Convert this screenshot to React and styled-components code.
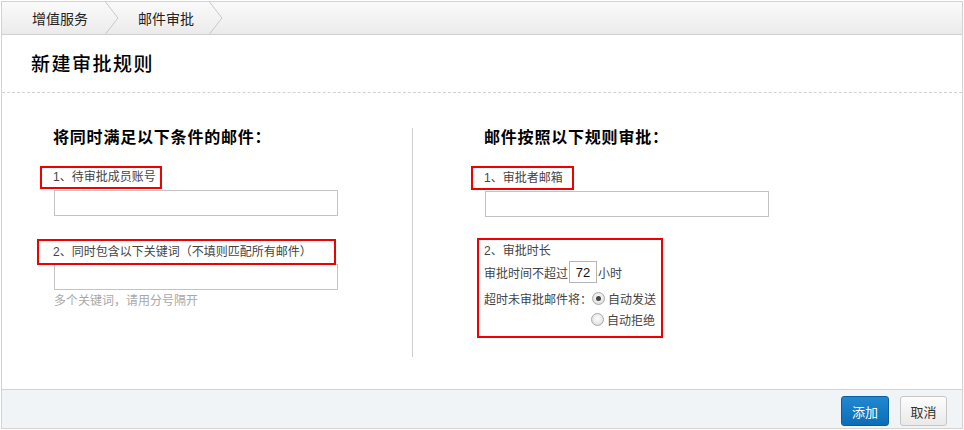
import styled, { createGlobalStyle } from "styled-components"

const Global = createGlobalStyle`
  html, body {
    margin: 0;
    padding: 0;
    background: #ffffff;
  }
  body {
    font-family: "Liberation Sans", "Noto Sans CJK SC", sans-serif;
    font-size: 12px;
    color: #333;
  }
`

const Page = styled.div`
  padding: 1px;
  width: 964px;
  box-sizing: border-box;
`

const Frame = styled.div`
  border: 1px solid #d3d3d3;
  height: 428px;
  box-sizing: border-box;
  display: flex;
  flex-direction: column;
`

const Crumbs = styled.div`
  height: 33px;
  box-sizing: border-box;
  border-bottom: 1px solid #d0d0d0;
  background: linear-gradient(#fafafa, #ebebeb);
  display: flex;
  align-items: stretch;
  padding-left: 30px;
`

const Crumb = styled.div`
  display: flex;
  align-items: center;
  font-size: 14px;
  color: #222;
  margin-right: ${(p) => p.$gap}px;
`

const Chevron = styled.svg`
  width: 14px;
  height: 32px;
  margin-left: ${(p) => p.$ml}px;
  flex: none;
`

const TitleBar = styled.div`
  height: 58px;
  box-sizing: border-box;
  border-bottom: 1px dashed #d2d2d2;
  display: flex;
  align-items: center;
  padding-left: 29px;
  padding-bottom: 2px;
`

const Title = styled.h1`
  margin: 0;
  font-size: 19px;
  font-weight: 500;
  letter-spacing: 1.5px;
  color: #000;
`

const Body = styled.div`
  flex: 1;
  display: flex;
  padding-top: 35px;
`

const Column = styled.div`
  box-sizing: border-box;
  width: ${(p) => p.$w}px;
  padding-left: ${(p) => p.$pl}px;
  ${(p) => p.$divider && "border-left: 1px solid #cfcfcf; height: 229px;"}
`

const Heading = styled.h2`
  margin: 0 0 18px;
  font-size: 16px;
  line-height: 20px;
  font-weight: bold;
  color: #000;
  letter-spacing: 0.8px;
`

const Field = styled.div`
  margin-bottom: ${(p) => p.$mb || 0}px;
`

const Marked = styled.div`
  display: inline-block;
  border: 2px solid #f00000;
  box-sizing: border-box;
  height: ${(p) => p.$h}px;
  line-height: ${(p) => p.$h - 4}px;
  margin-left: ${(p) => -(p.$pl + 2)}px;
  padding-left: ${(p) => p.$pl}px;
  padding-right: ${(p) => p.$pr}px;
  margin-bottom: ${(p) => p.$mb}px;
  color: #444;
  font-size: 12px;
`

const TextInput = styled.input`
  display: block;
  width: 284px;
  height: 26px;
  box-sizing: border-box;
  border: 1px solid #c3c3c3;
  margin: 0 0 0 1px;
  padding: 0 4px;
  outline: none;
`

const Hint = styled.div`
  color: #a8a8a8;
  font-size: 12px;
  line-height: 20px;
  margin-top: 1px;
  margin-left: 1px;
`

const Box = styled.div`
  display: inline-block;
  border: 2px solid #f00000;
  margin-left: -7px;
  padding: 0 0 6px 5px;
  width: 186px;
  height: 100px;
  box-sizing: border-box;
  color: #444;
  font-size: 12px;
  margin-top: 21px;
  white-space: nowrap;
`

const Line = styled.div`
  display: flex;
  align-items: center;
  height: ${(p) => p.$h}px;
  padding-left: ${(p) => p.$pl || 0}px;
`

const SmallInput = styled.input`
  width: 28px;
  height: 22px;
  box-sizing: border-box;
  border: 1px solid #b5b5b5;
  margin: 0 1px;
  padding: 0;
  text-align: center;
  font-family: inherit;
  font-size: 13px;
  color: #111;
  outline: none;
`

const Radio = styled.span`
  width: 11px;
  height: 11px;
  border-radius: 50%;
  border: 1px solid #a8a8a8;
  background: radial-gradient(circle at 50% 40%, #ffffff, #d6d6d6);
  margin-right: 3px;
  position: relative;
  flex: none;
  &::after {
    content: "";
    display: ${(p) => (p.$on ? "block" : "none")};
    position: absolute;
    left: 3px;
    top: 3px;
    width: 5px;
    height: 5px;
    border-radius: 50%;
    background: #444;
  }
`

const Footer = styled.div`
  height: 39px;
  box-sizing: border-box;
  border-top: 1px solid #d3d3d3;
  background: #f1f4f7;
  display: flex;
  justify-content: flex-end;
  align-items: flex-start;
  gap: 11px;
  padding: 6px 15px 0 0;
`

const Button = styled.button`
  height: 30px;
  width: ${(p) => p.$w}px;
  box-sizing: border-box;
  border-radius: 3px;
  font-family: inherit;
  font-size: 13px;
  padding: 0;
  cursor: pointer;
  border: 1px solid ${(p) => (p.$primary ? "#0b5e9c" : "#c6c6c6")};
  color: ${(p) => (p.$primary ? "#fff" : "#333")};
  background: ${(p) =>
    p.$primary
      ? "linear-gradient(#2188d2, #0c6db6)"
      : "linear-gradient(#fdfdfd, #e9e9e9)"};
`

const Arrow = ({ ml }) => (
  <Chevron $ml={ml} viewBox="0 0 14 32">
    <polyline points="0.5,0 13,16 0.5,32" fill="none" stroke="#c8c8c8" strokeWidth="1" />
  </Chevron>
)

export default function App() {
  return (
    <Page>
      <Global />
      <Frame>
        <Crumbs>
          <Crumb $gap={19}>
            增值服务
            <Arrow ml={17} />
          </Crumb>
          <Crumb $gap={0}>
            邮件审批
            <Arrow ml={15} />
          </Crumb>
        </Crumbs>
        <TitleBar>
          <Title>新建审批规则</Title>
        </TitleBar>
        <Body>
          <Column $w={410} $pl={51}>
            <Heading>将同时满足以下条件的邮件：</Heading>
            <Field $mb={23}>
              <Marked $h={23} $pl={11} $pr={4} $mb={1}>1、待审批成员账号</Marked>
              <TextInput />
            </Field>
            <Field>
              <Marked $h={26} $pl={14} $pr={22} $mb={-1}>2、同时包含以下关键词（不填则匹配所有邮件）</Marked>
              <TextInput />
              <Hint>多个关键词，请用分号隔开</Hint>
            </Field>
          </Column>
          <Column $w={550} $pl={71} $divider>
            <Heading>邮件按照以下规则审批：</Heading>
            <Field>
              <Marked $h={24} $pl={11} $pr={9} $mb={1}>1、审批者邮箱</Marked>
              <TextInput />
            </Field>
            <Box>
              <Line $h={18}>2、审批时长</Line>
              <Line $h={28}>
                审批时间不超过<SmallInput defaultValue="72" />小时
              </Line>
              <Line $h={24}>
                超时未审批邮件将：
                <Radio $on />
                自动发送
              </Line>
              <Line $h={18} $pl={107}>
                <Radio />
                自动拒绝
              </Line>
            </Box>
          </Column>
        </Body>
        <Footer>
          <Button $primary $w={48}>添加</Button>
          <Button $w={47}>取消</Button>
        </Footer>
      </Frame>
    </Page>
  )
}
